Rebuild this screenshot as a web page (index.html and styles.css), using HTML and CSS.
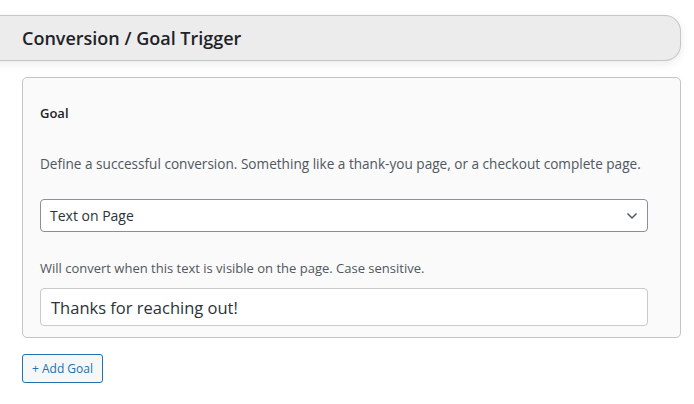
FILE: index.html
```html
<!DOCTYPE html>
<html>
<head>
<meta charset="utf-8">
<link rel="stylesheet" href="styles.css">
</head>
<body>
<div class="page">
  <div class="section-head">
    <h2 class="section-title">Conversion / Goal Trigger</h2>
  </div>
  <div class="goal-card">
    <div class="goal-label">Goal</div>
    <p class="help help-1">Define a successful conversion. Something like a thank-you page, or a checkout complete page.</p>
    <div class="select">
      <span class="select-value">Text on Page</span>
      <svg class="chevron" width="12" height="8" viewBox="0 0 12 8"><path d="M1.5 1.5 L6 6 L10.5 1.5" fill="none" stroke="#50575e" stroke-width="1.5"/></svg>
    </div>
    <p class="help help-2">Will convert when this text is visible on the page. Case sensitive.</p>
    <div class="text-input">Thanks for reaching out!</div>
  </div>
  <button class="add-btn">+ Add Goal</button>
</div>
</body>
</html>
```
FILE: styles.css
```css
html, body {
  margin: 0;
  padding: 0;
  background: #ffffff;
}
body {
  font-family: "Open Sans", "Noto Sans", sans-serif;
  color: #1d2327;
}
.page {
  padding: 15px 13px 0 22px;
}
.section-head {
  margin-left: -40px;
  height: 44px;
  background: #ececec;
  border: 1px solid #c6c6c6;
  border-left: none;
  border-radius: 0 16px 16px 0;
  box-shadow: 0 3px 10px rgba(0,0,0,0.08);
  display: flex;
  align-items: center;
  padding-left: 40px;
}
.section-title {
  margin: 0;
  font-size: 18px;
  font-weight: 600;
  color: #1d2327;
}
.goal-card {
  margin-top: 16px;
  background: #fafafa;
  border: 1px solid #c3c4c7;
  border-radius: 5px;
  padding: 26px 32px 11px 17px;
}
.goal-label {
  font-size: 13px;
  font-weight: 600;
  line-height: 18px;
}
.help {
  margin: 0;
  font-size: 13px;
  line-height: 18px;
  color: #50575e;
}
.help-1 {
  margin-top: 33px;
  font-size: 13.6px;
}
.help-2 {
  margin-top: 27px;
}
.select {
  margin-top: 26px;
  height: 31px;
  background: #fff;
  border: 1px solid #8c8f94;
  border-radius: 4px;
  display: flex;
  align-items: center;
  justify-content: space-between;
  padding: 0 9px 0 9px;
  font-size: 14px;
  color: #2c3338;
}
.chevron {
  display: block;
}
.text-input {
  margin-top: 11px;
  height: 36px;
  background: #fff;
  border: 1px solid #c9cacc;
  border-radius: 4px;
  display: flex;
  align-items: center;
  padding: 0 10px;
  font-size: 16.5px;
  color: #2c3338;
}
.add-btn {
  margin-top: 16px;
  height: 29px;
  padding: 0 9px;
  background: #f6f7f7;
  border: 1px solid #2271b1;
  border-radius: 3px;
  color: #2271b1;
  font-family: inherit;
  font-size: 12px;
}
```
